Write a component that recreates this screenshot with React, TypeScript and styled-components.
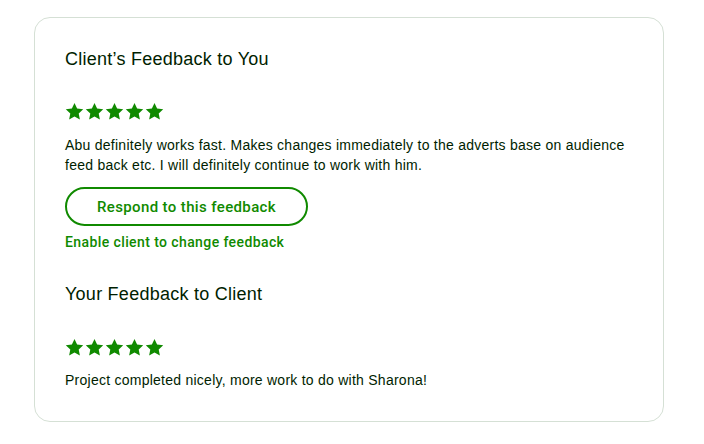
import React from "react";
import styled, { createGlobalStyle } from "styled-components";

const GREEN = "#108a00";
const INK = "#001e00";

const Global = createGlobalStyle`
  html, body { margin: 0; padding: 0; background: #ffffff; }
  body { font-family: "Liberation Sans", Arial, sans-serif; color: ${INK}; }
`;

const Page = styled.div`
  padding: 17px 0 0 34px;
`;

const Card = styled.section`
  box-sizing: border-box;
  width: 630px;
  height: 405px;
  border: 1px solid #d5e0d5;
  border-radius: 16px;
  padding: 27px 30px 0 30px;
`;

const Title = styled.h2`
  margin: 0;
  font-size: 18px;
  font-weight: 400;
  line-height: 28px;
  color: ${INK};
  letter-spacing: 0.25px;
`;

const Stars = styled.div<{ $top: number }>`
  display: flex;
  gap: 1px;
  margin-top: ${(p) => p.$top}px;
  height: 20px;
  align-items: center;
`;

const Comment = styled.p<{ $top: number }>`
  margin: ${(p) => p.$top}px 0 0 0;
  font-size: 14px;
  line-height: 20px;
  letter-spacing: 0.25px;
  color: ${INK};
`;

const OutlineButton = styled.button`
  display: block;
  box-sizing: border-box;
  margin-top: 12px;
  width: 243px;
  height: 39px;
  border: 2px solid ${GREEN};
  border-radius: 20px;
  background: #fff;
  color: ${GREEN};
  font-family: Roboto, "Liberation Sans", sans-serif;
  font-size: 15px;
  font-weight: 500;
  letter-spacing: 0.37px;
  padding: 0;
  cursor: pointer;
`;

const TextLink = styled.a`
  display: block;
  margin-top: 6px;
  font-family: Roboto, "Liberation Sans", sans-serif;
  font-size: 14px;
  line-height: 20px;
  font-weight: 500;
  letter-spacing: 0.4px;
  color: ${GREEN};
  text-decoration: none;
`;

const SecondTitle = styled(Title)`
  margin-top: 28px;
`;

const Star = () => (
  <svg width="19" height="19" viewBox="0 0 24 24" aria-hidden="true">
    <path
      fill={GREEN}
      d="M12 1.2l3.3 7.1 7.7.9-5.7 5.3 1.5 7.7L12 18.3l-6.8 3.9 1.5-7.7L1 9.2l7.7-.9z"
    />
  </svg>
);

const Rating = ({ top }: { top: number }) => (
  <Stars $top={top}>
    {[0, 1, 2, 3, 4].map((i) => (
      <Star key={i} />
    ))}
  </Stars>
);

export default function App() {
  return (
    <>
      <Global />
      <Page>
        <Card>
          <Title>Client’s Feedback to You</Title>
          <Rating top={28} />
          <Comment $top={14}>
            Abu definitely works fast. Makes changes immediately to the adverts base on audience
            feed back etc. I will definitely continue to work with him.
          </Comment>
          <OutlineButton>Respond to this feedback</OutlineButton>
          <TextLink href="#">Enable client to change feedback</TextLink>
          <SecondTitle>Your Feedback to Client</SecondTitle>
          <Rating top={29} />
          <Comment $top={13}>Project completed nicely, more work to do with Sharona!</Comment>
        </Card>
      </Page>
    </>
  );
}
